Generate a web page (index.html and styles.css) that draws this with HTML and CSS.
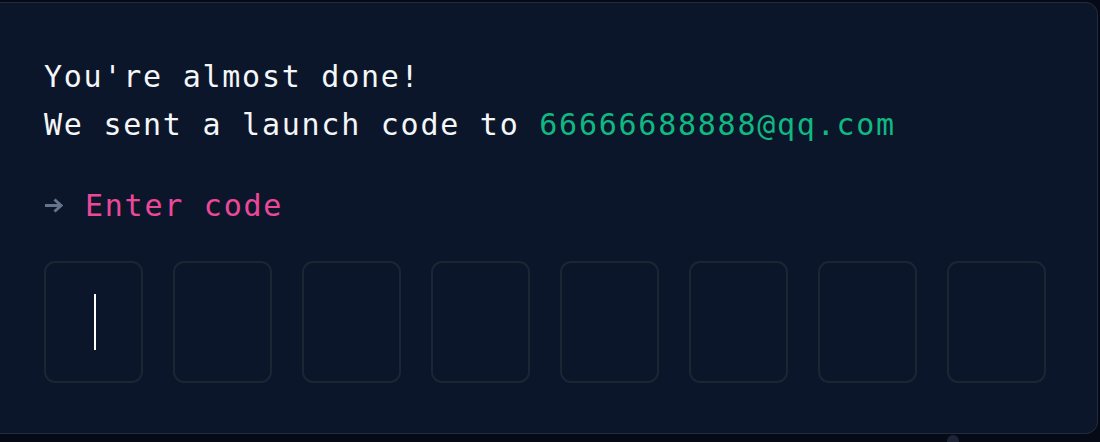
FILE: index.html
```html
<!DOCTYPE html>
<html>
<head>
<meta charset="utf-8">
<link rel="stylesheet" href="styles.css">
</head>
<body>
<div class="card">
  <p class="line">You're almost done!</p>
  <p class="line">We sent a launch code to <span class="email">66666688888@qq.com</span></p>
  <div class="prompt">
    <svg class="arrow" width="19" height="15" viewBox="0 0 19 15"><path d="M1 7.5H17M10.5 1.5L17 7.5L10.5 13.5" fill="none" stroke="#64748b" stroke-width="3"/></svg>
    <span class="enter">Enter code</span>
  </div>
  <div class="boxes">
    <div class="box"><span class="cursor"></span></div>
    <div class="box"></div>
    <div class="box"></div>
    <div class="box"></div>
    <div class="box"></div>
    <div class="box"></div>
    <div class="box"></div>
    <div class="box"></div>
  </div>
</div>
<div class="dot"></div>
</body>
</html>
```
FILE: styles.css
```css
html, body {
  margin: 0;
  padding: 0;
  background: #060a17;
  height: 442px;
  overflow: hidden;
}
body {
  font-family: "DejaVu Sans Mono", "Liberation Mono", monospace;
  position: relative;
}
.card {
  box-sizing: border-box;
  margin: 2px 0 0 -20px;
  width: 1118px;
  height: 432px;
  background: #0c162b;
  border: 1px solid #232c3c;
  border-radius: 12px;
  padding: 50px 0 0 63px;
}
.line {
  margin: 0;
  font-size: 30px;
  line-height: 48px;
  letter-spacing: 1.75px;
  color: #f4f6f8;
}
.email {
  color: #10b981;
}
.prompt {
  display: flex;
  align-items: center;
  margin-top: 33px;
  height: 48px;
}
.arrow {
  margin-right: 22px;
  margin-top: -2px;
}
.enter {
  font-size: 30px;
  letter-spacing: 1.75px;
  color: #ec4899;
  line-height: 48px;
}
.boxes {
  display: flex;
  gap: 30px;
  margin-top: 31px;
}
.box {
  box-sizing: border-box;
  width: 99px;
  height: 122px;
  border: 2px solid #1d2533;
  border-radius: 11px;
  display: flex;
  align-items: center;
  justify-content: center;
}
.cursor {
  display: block;
  width: 2px;
  height: 56px;
  background: #ffffff;
  margin-left: 3px;
}
.dot {
  position: absolute;
  left: 947px;
  top: 435px;
  width: 12px;
  height: 12px;
  border-radius: 50%;
  background: #1e2436;
}
```
